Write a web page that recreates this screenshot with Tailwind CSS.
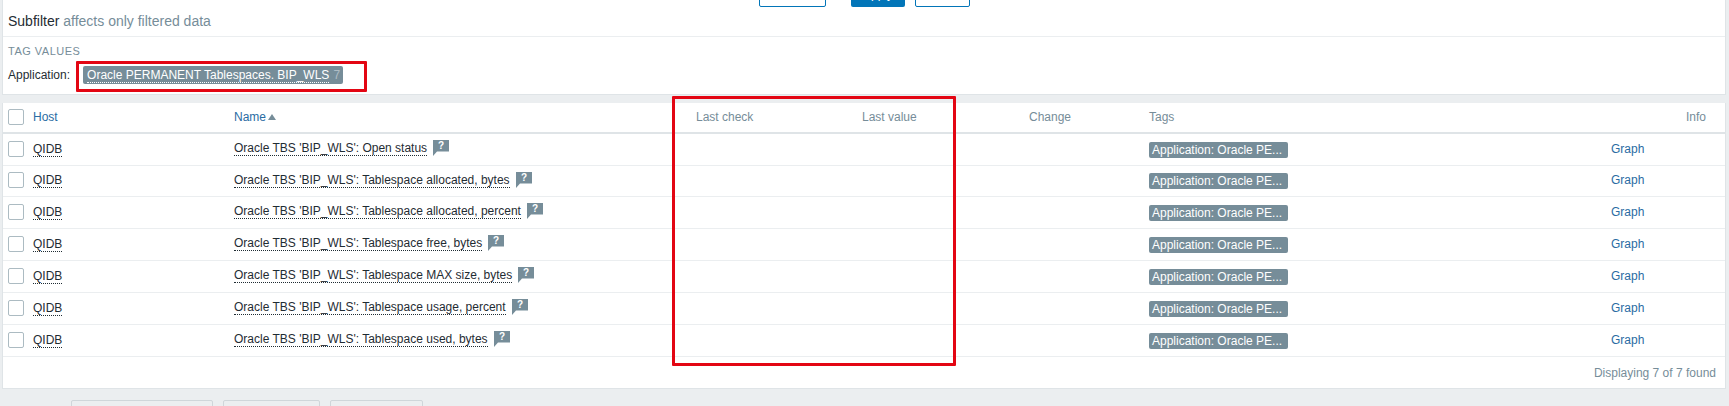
<!DOCTYPE html>
<html>
<head>
<meta charset="utf-8">
<script src="https://cdn.jsdelivr.net/npm/@tailwindcss/browser@4"></script>
</head>
<body class="bg-[#ebeef0] font-['Liberation_Sans',Arial,sans-serif] text-[12px] leading-[14px] text-[#1f2c33] overflow-hidden">
<div class="relative h-[406px] w-[1729px] overflow-hidden">
  <section class="ml-[2px] mr-[3px] h-[95px] bg-white border-x border-b border-[#dfe4e7]">
    <div class="h-[37px] border-b border-[#ebeef0] relative">
      <div class="flex h-[7px] items-end pl-[756px] overflow-hidden">
        <div class="h-[24px] w-[67px] shrink-0 rounded-[2px] border border-[#0275b8] bg-white text-center text-[#0275b8] leading-[22px]">Save as</div>
        <div class="ml-[25px] h-[24px] w-[54px] shrink-0 rounded-[2px] bg-[#0275b8] text-center text-white leading-[22px]">Apply</div>
        <div class="ml-[10px] h-[24px] w-[55px] shrink-0 rounded-[2px] border border-[#0275b8] bg-white text-center text-[#0275b8] leading-[22px]">Reset</div>
      </div>
      <div class="pl-[5px] pt-[6px] text-[14px] leading-[16px]">Subfilter <span class="text-[#768d99]">affects only filtered data</span></div>
    </div>
    <div class="pl-[5px] pt-[8px]">
      <div class="text-[11px] leading-[13px] tracking-[0.5px] text-[#768d99]">TAG VALUES</div>
      <div class="mt-[8px] flex items-center">
        <span>Application:</span>
        <span class="ml-[13px] flex h-[18px] items-center rounded-[2px] bg-[#768d99] pl-[4px] pr-[3px] text-white"><span class="border-b border-dotted border-white leading-[14px]">Oracle PERMANENT Tablespaces. BIP_WLS</span><span class="ml-[4px] text-[#aebcc4]">7</span></span>
      </div>
    </div>
  </section>

  <section class="ml-[2px] mr-[3px] mt-[8px] h-[286px] bg-white border-x border-b border-[#dfe4e7]">
    <div class="grid h-[31px] grid-cols-[30px_201px_462px_166px_167px_120px_463px_74px_1fr] items-center border-b-2 border-[#dfe4e7] pb-[2px] text-[#768d99]">
      <div class="pl-[5px]"><div class="h-[16px] w-[16px] rounded-[2px] border border-[#acbbc2] bg-white"></div></div>
      <div class="text-[#2a6ca3]">Host</div>
      <div class="flex items-center text-[#2a6ca3]">Name<svg class="ml-[2px]" width="8" height="6" viewBox="0 0 8 6"><path d="M4 0 8 6H0z" fill="#768d99"/></svg></div>
      <div>Last check</div>
      <div>Last value</div>
      <div>Change</div>
      <div>Tags</div>
      <div></div>
      <div>Info</div>
    </div>

    <div class="grid h-[32px] grid-cols-[30px_201px_915px_462px_1fr] items-center border-b border-[#ebeef0]">
      <div class="pb-[2px] pl-[5px]"><div class="h-[16px] w-[16px] rounded-[2px] border border-[#acbbc2] bg-white"></div></div>
      <div class="pb-[2px]"><span class="border-b border-dotted border-[#1f2c33]">QIDB</span></div>
      <div class="flex items-center pb-[2px]"><span class="border-b border-dotted border-[#1f2c33]">Oracle TBS 'BIP_WLS': Open status</span><svg class="ml-[6px] mt-[-1px]" width="16" height="16" viewBox="0 0 16 16"><path d="M0 0H16V11.5H4L0 16z" fill="#768d99"/><text x="8" y="9" font-size="10" font-weight="700" text-anchor="middle" fill="#fff">?</text></svg></div>
      <div><span class="inline-block h-[16px] w-[139px] rounded-[2px] bg-[#768d99] pl-[3px] leading-[16px] text-white">Application: Oracle PE...</span></div>
      <div class="pb-[2px] text-[#2a6ca3]">Graph</div>
    </div>
    <div class="grid h-[31px] grid-cols-[30px_201px_915px_462px_1fr] items-center border-b border-[#ebeef0]">
      <div class="pb-[2px] pl-[5px]"><div class="h-[16px] w-[16px] rounded-[2px] border border-[#acbbc2] bg-white"></div></div>
      <div class="pb-[2px]"><span class="border-b border-dotted border-[#1f2c33]">QIDB</span></div>
      <div class="flex items-center pb-[2px]"><span class="border-b border-dotted border-[#1f2c33]">Oracle TBS 'BIP_WLS': Tablespace allocated, bytes</span><svg class="ml-[6px] mt-[-1px]" width="16" height="16" viewBox="0 0 16 16"><path d="M0 0H16V11.5H4L0 16z" fill="#768d99"/><text x="8" y="9" font-size="10" font-weight="700" text-anchor="middle" fill="#fff">?</text></svg></div>
      <div><span class="inline-block h-[16px] w-[139px] rounded-[2px] bg-[#768d99] pl-[3px] leading-[16px] text-white">Application: Oracle PE...</span></div>
      <div class="pb-[2px] text-[#2a6ca3]">Graph</div>
    </div>
    <div class="grid h-[32px] grid-cols-[30px_201px_915px_462px_1fr] items-center border-b border-[#ebeef0]">
      <div class="pb-[2px] pl-[5px]"><div class="h-[16px] w-[16px] rounded-[2px] border border-[#acbbc2] bg-white"></div></div>
      <div class="pb-[2px]"><span class="border-b border-dotted border-[#1f2c33]">QIDB</span></div>
      <div class="flex items-center pb-[2px]"><span class="border-b border-dotted border-[#1f2c33]">Oracle TBS 'BIP_WLS': Tablespace allocated, percent</span><svg class="ml-[6px] mt-[-1px]" width="16" height="16" viewBox="0 0 16 16"><path d="M0 0H16V11.5H4L0 16z" fill="#768d99"/><text x="8" y="9" font-size="10" font-weight="700" text-anchor="middle" fill="#fff">?</text></svg></div>
      <div><span class="inline-block h-[16px] w-[139px] rounded-[2px] bg-[#768d99] pl-[3px] leading-[16px] text-white">Application: Oracle PE...</span></div>
      <div class="pb-[2px] text-[#2a6ca3]">Graph</div>
    </div>
    <div class="grid h-[32px] grid-cols-[30px_201px_915px_462px_1fr] items-center border-b border-[#ebeef0]">
      <div class="pb-[2px] pl-[5px]"><div class="h-[16px] w-[16px] rounded-[2px] border border-[#acbbc2] bg-white"></div></div>
      <div class="pb-[2px]"><span class="border-b border-dotted border-[#1f2c33]">QIDB</span></div>
      <div class="flex items-center pb-[2px]"><span class="border-b border-dotted border-[#1f2c33]">Oracle TBS 'BIP_WLS': Tablespace free, bytes</span><svg class="ml-[6px] mt-[-1px]" width="16" height="16" viewBox="0 0 16 16"><path d="M0 0H16V11.5H4L0 16z" fill="#768d99"/><text x="8" y="9" font-size="10" font-weight="700" text-anchor="middle" fill="#fff">?</text></svg></div>
      <div><span class="inline-block h-[16px] w-[139px] rounded-[2px] bg-[#768d99] pl-[3px] leading-[16px] text-white">Application: Oracle PE...</span></div>
      <div class="pb-[2px] text-[#2a6ca3]">Graph</div>
    </div>
    <div class="grid h-[32px] grid-cols-[30px_201px_915px_462px_1fr] items-center border-b border-[#ebeef0]">
      <div class="pb-[2px] pl-[5px]"><div class="h-[16px] w-[16px] rounded-[2px] border border-[#acbbc2] bg-white"></div></div>
      <div class="pb-[2px]"><span class="border-b border-dotted border-[#1f2c33]">QIDB</span></div>
      <div class="flex items-center pb-[2px]"><span class="border-b border-dotted border-[#1f2c33]">Oracle TBS 'BIP_WLS': Tablespace MAX size, bytes</span><svg class="ml-[6px] mt-[-1px]" width="16" height="16" viewBox="0 0 16 16"><path d="M0 0H16V11.5H4L0 16z" fill="#768d99"/><text x="8" y="9" font-size="10" font-weight="700" text-anchor="middle" fill="#fff">?</text></svg></div>
      <div><span class="inline-block h-[16px] w-[139px] rounded-[2px] bg-[#768d99] pl-[3px] leading-[16px] text-white">Application: Oracle PE...</span></div>
      <div class="pb-[2px] text-[#2a6ca3]">Graph</div>
    </div>
    <div class="grid h-[32px] grid-cols-[30px_201px_915px_462px_1fr] items-center border-b border-[#ebeef0]">
      <div class="pb-[2px] pl-[5px]"><div class="h-[16px] w-[16px] rounded-[2px] border border-[#acbbc2] bg-white"></div></div>
      <div class="pb-[2px]"><span class="border-b border-dotted border-[#1f2c33]">QIDB</span></div>
      <div class="flex items-center pb-[2px]"><span class="border-b border-dotted border-[#1f2c33]">Oracle TBS 'BIP_WLS': Tablespace usage, percent</span><svg class="ml-[6px] mt-[-1px]" width="16" height="16" viewBox="0 0 16 16"><path d="M0 0H16V11.5H4L0 16z" fill="#768d99"/><text x="8" y="9" font-size="10" font-weight="700" text-anchor="middle" fill="#fff">?</text></svg></div>
      <div><span class="inline-block h-[16px] w-[139px] rounded-[2px] bg-[#768d99] pl-[3px] leading-[16px] text-white">Application: Oracle PE...</span></div>
      <div class="pb-[2px] text-[#2a6ca3]">Graph</div>
    </div>
    <div class="grid h-[32px] grid-cols-[30px_201px_915px_462px_1fr] items-center border-b border-[#ebeef0]">
      <div class="pb-[2px] pl-[5px]"><div class="h-[16px] w-[16px] rounded-[2px] border border-[#acbbc2] bg-white"></div></div>
      <div class="pb-[2px]"><span class="border-b border-dotted border-[#1f2c33]">QIDB</span></div>
      <div class="flex items-center pb-[2px]"><span class="border-b border-dotted border-[#1f2c33]">Oracle TBS 'BIP_WLS': Tablespace used, bytes</span><svg class="ml-[6px] mt-[-1px]" width="16" height="16" viewBox="0 0 16 16"><path d="M0 0H16V11.5H4L0 16z" fill="#768d99"/><text x="8" y="9" font-size="10" font-weight="700" text-anchor="middle" fill="#fff">?</text></svg></div>
      <div><span class="inline-block h-[16px] w-[139px] rounded-[2px] bg-[#768d99] pl-[3px] leading-[16px] text-white">Application: Oracle PE...</span></div>
      <div class="pb-[2px] text-[#2a6ca3]">Graph</div>
    </div>
    <div class="pr-[9px] pt-[9px] text-right text-[#768d99]">Displaying 7 of 7 found</div>
  </section>

  <div class="ml-[71px] mt-[11px] flex gap-[10px]">
    <div class="h-[24px] w-[142px] rounded-[2px] border border-[#cfd6da] bg-[#ebeef0]"></div>
    <div class="h-[24px] w-[97px] rounded-[2px] border border-[#cfd6da] bg-[#ebeef0]"></div>
    <div class="h-[24px] w-[93px] rounded-[2px] border border-[#cfd6da] bg-[#ebeef0]"></div>
  </div>

  <div class="absolute left-[76px] top-[61px] h-[31px] w-[291px] rounded-[1px] border-[3px] border-[#e30613]"></div>
  <div class="absolute left-[672px] top-[96px] h-[270px] w-[284px] rounded-[1px] border-[3px] border-[#e30613]"></div>
</div>
</body>
</html>
